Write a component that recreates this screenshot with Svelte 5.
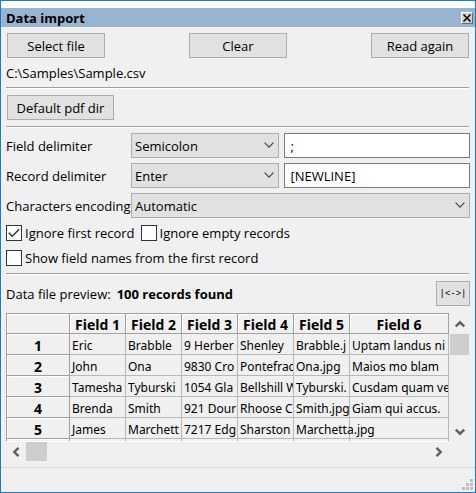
<script>
	let fieldDelimiter = 'Semicolon';
	let recordDelimiter = 'Enter';
	let encoding = 'Automatic';
	let fieldChar = ';';
	let recordChar = '[NEWLINE]';
	let ignoreFirst = true;
	let ignoreEmpty = false;
	let showNames = false;

	const fields = ['Field 1', 'Field 2', 'Field 3', 'Field 4', 'Field 5', 'Field 6'];
	const records = [
		['Eric', 'Brabble', '9 Herber', 'Shenley', 'Brabble.j', 'Uptam landus ni'],
		['John', 'Ona', '9830 Cro', 'Pontefrac', 'Ona.jpg', 'Maios mo blam'],
		['Tamesha', 'Tyburski', '1054 Gla', 'Bellshill W', 'Tyburski.', 'Cusdam quam ve'],
		['Brenda', 'Smith', '921 Dour', 'Rhoose C', 'Smith.jpg', 'Giam qui accus.'],
		['James', 'Marchett', '7217 Edg', 'Sharston', 'Marchetta.jpg', ''],
		['', '', '', '', '', '']
	];
</script>

{#snippet chevron()}
	<svg class="chevron" width="10" height="6" viewBox="0 0 10 6" aria-hidden="true">
		<path d="M0.6 0.7 5 5.1 9.4 0.7" fill="none" stroke="#444" stroke-width="1.2" />
	</svg>
{/snippet}

{#snippet arrow(angle)}
	<svg width="10" height="10" viewBox="0 0 10 10" aria-hidden="true">
		<path d="M0.8 7.5 5 3.3 9.2 7.5" fill="none" stroke="#606060" stroke-width="2.4" transform="rotate({angle} 5 5)" />
	</svg>
{/snippet}

{#snippet tick()}
	<svg class="tick" width="12" height="10" viewBox="0 0 12 10" aria-hidden="true">
		<path d="M0.8 4.8 4.2 8.2 11.2 1.2" fill="none" stroke="#333" stroke-width="1.5" />
	</svg>
{/snippet}

<main class="window">
	<header class="titlebar">
		<h1>Data import</h1>
		<button class="close" aria-label="Close">
			<svg width="8" height="8" viewBox="0 0 8 8" aria-hidden="true">
				<path d="M0.5 0.5 7.5 7.5M7.5 0.5 0.5 7.5" stroke="#000" stroke-width="1.5" />
			</svg>
		</button>
	</header>

	<div class="content">
		<div class="actions">
			<button class="btn">Select file</button>
			<button class="btn">Clear</button>
			<button class="btn">Read again</button>
		</div>
		<p class="path">C:\Samples\Sample.csv</p>
		<hr />
		<div class="actions">
			<button class="btn dir">Default pdf dir</button>
		</div>
		<hr />

		<div class="form">
			<label for="field-delimiter">Field delimiter</label>
			<div class="select">
				<select id="field-delimiter" bind:value={fieldDelimiter}>
					<option>Semicolon</option>
					<option>Comma</option>
					<option>Tab</option>
				</select>
				{@render chevron()}
			</div>
			<input type="text" aria-label="Field delimiter character" bind:value={fieldChar} />

			<label for="record-delimiter">Record delimiter</label>
			<div class="select">
				<select id="record-delimiter" bind:value={recordDelimiter}>
					<option>Enter</option>
					<option>Semicolon</option>
				</select>
				{@render chevron()}
			</div>
			<input type="text" aria-label="Record delimiter character" bind:value={recordChar} />

			<label for="encoding">Characters encoding</label>
			<div class="select wide">
				<select id="encoding" bind:value={encoding}>
					<option>Automatic</option>
					<option>UTF-8</option>
				</select>
				{@render chevron()}
			</div>
		</div>

		<div class="checks">
			<label class="check">
				<input type="checkbox" bind:checked={ignoreFirst} />
				{@render tick()}
				Ignore first record
			</label>
			<label class="check">
				<input type="checkbox" bind:checked={ignoreEmpty} />
				{@render tick()}
				Ignore empty records
			</label>
		</div>
		<div class="checks">
			<label class="check">
				<input type="checkbox" bind:checked={showNames} />
				{@render tick()}
				Show field names from the first record
			</label>
		</div>
		<hr />

		<div class="preview-head">
			<span>Data file preview:</span>
			<strong>100 records found</strong>
			<button class="btn fit" aria-label="Fit columns">|&lt;-&gt;|</button>
		</div>

		<div class="preview">
			<div class="viewport">
				<table>
					<thead>
						<tr>
							<th class="num"></th>
							{#each fields as field, i}
								<th class:last={i === fields.length - 1}>{field}</th>
							{/each}
						</tr>
					</thead>
					<tbody>
						{#each records as record, r}
							<tr>
								<th>{r < 5 ? r + 1 : ''}</th>
								{#each record as value, c}
									<td class:spill={c === 4 && value && !record[c + 1]}>{value}</td>
								{/each}
							</tr>
						{/each}
					</tbody>
				</table>
			</div>
			<div class="scroll vertical">
				<button aria-label="Scroll up">{@render arrow(0)}</button>
				<div class="thumb"></div>
				<button class="end" aria-label="Scroll down">{@render arrow(180)}</button>
			</div>
			<div class="scroll horizontal">
				<button aria-label="Scroll left">{@render arrow(270)}</button>
				<div class="thumb"></div>
				<button class="end" aria-label="Scroll right">{@render arrow(90)}</button>
			</div>
		</div>
	</div>

	<footer class="status">
		<svg width="11" height="11" viewBox="0 0 11 11" fill="#bfbfbf" aria-hidden="true">
			<path d="M8 0h3v3h-3zM4 4h3v3h-3zM8 4h3v3h-3zM0 8h3v3h-3zM4 8h3v3h-3zM8 8h3v3h-3z" />
		</svg>
	</footer>
</main>

<style>
	:global(body) {
		margin: 0;
	}

	.window,
	.window * {
		box-sizing: border-box;
	}

	.window {
		display: flex;
		flex-direction: column;
		min-height: 100vh;
		padding-top: 7px;
		border: 1px solid #187bcd;
		background: linear-gradient(#fff 7px, #f0f0f0 7px);
		color: #000;
		font-family: 'Open Sans', 'Noto Sans', sans-serif;
		font-size: 13px;
		line-height: 18px;
	}

	button,
	select,
	input {
		margin: 0;
		color: inherit;
		font: inherit;
	}

	.titlebar {
		display: flex;
		align-items: center;
		justify-content: space-between;
		height: 19px;
		padding: 0 2px 0 5px;
		background: #99b4d1;
	}

	h1 {
		margin: 0;
		font-size: 13px;
		line-height: 18px;
	}

	.close {
		display: grid;
		place-items: center;
		width: 12px;
		height: 12px;
		padding: 0;
		border: 1px solid;
		border-color: #fff #696969 #696969 #fff;
		background: #d4d0c8;
	}

	.content {
		flex: 1;
		padding: 6px 5px 0;
	}

	.actions {
		display: flex;
		justify-content: space-between;
		padding: 0 1px;
	}

	.btn {
		width: 98px;
		height: 25px;
		padding: 0;
		border: 1px solid #adadad;
		background: #e1e1e1;
	}

	.dir {
		width: 107px;
	}

	.path {
		margin: 6px 0 5px;
	}

	hr {
		height: 2px;
		margin: 0 1px 6px 0;
		border: 0;
		border-top: 1px solid #a0a0a0;
		border-bottom: 1px solid #fff;
	}

	.actions + hr {
		margin-top: 6px;
		margin-bottom: 5px;
	}

	.form {
		display: grid;
		grid-template-columns: 120px 4fr 5fr;
		gap: 5px;
		align-items: center;
	}

	.form label {
		white-space: nowrap;
	}

	.select {
		position: relative;
	}

	.wide {
		grid-column: span 2;
	}

	select,
	input[type='text'] {
		display: block;
		width: 100%;
		height: 25px;
		border-radius: 0;
		appearance: none;
	}

	select {
		padding: 0 24px 0 3px;
		border: 1px solid #adadad;
		background: #e1e1e1;
	}

	input[type='text'] {
		padding: 0 5px;
		border: 1px solid #7a7a7a;
		background: #fff;
	}

	.chevron {
		position: absolute;
		top: 9px;
		right: 5px;
		pointer-events: none;
	}

	.checks {
		display: flex;
		gap: 6px;
		margin: 6px 0;
	}

	.checks + .checks {
		margin-top: 7px;
	}

	.check {
		position: relative;
		display: flex;
		align-items: center;
		gap: 3px;
		height: 18px;
		white-space: nowrap;
	}

	.check input {
		width: 16px;
		height: 16px;
		border: 1px solid #333;
		background: #fff;
		appearance: none;
	}

	.tick {
		position: absolute;
		top: 4px;
		left: 2px;
		visibility: hidden;
		pointer-events: none;
	}

	.check input:checked + .tick {
		visibility: visible;
	}

	.preview-head {
		display: flex;
		align-items: center;
		gap: 6px;
		margin-bottom: 7px;
	}

	.fit {
		width: 34px;
		margin-left: auto;
		font-family: 'Liberation Mono', monospace;
		font-size: 9px;
	}

	.preview {
		display: grid;
		grid-template-columns: 1fr 19px;
		grid-template-rows: 129px 19px;
		column-gap: 1px;
		padding-right: 1px;
	}

	.viewport {
		overflow: hidden;
		border-bottom: 1px solid #fff;
	}

	table {
		width: 100%;
		border-left: 1px solid #a0a0a0;
		border-top: 1px solid #a0a0a0;
		border-spacing: 0;
		table-layout: fixed;
	}

	th,
	td {
		height: 21px;
		padding: 4px 0 0;
		overflow: hidden;
		line-height: 16px;
		white-space: nowrap;
	}

	thead th {
		width: 56px;
		height: 20px;
		padding-top: 3px;
	}

	thead .num {
		width: 63px;
	}

	thead .last {
		width: auto;
	}

	th {
		border-right: 1px solid #a0a0a0;
		border-bottom: 1px solid #a0a0a0;
		box-shadow: inset 1px 1px #fff;
		font-size: 14px;
		text-align: center;
	}

	td {
		padding-left: 2px;
		border-right: 1px solid #b8b8b8;
		border-bottom: 1px solid #b8b8b8;
		font-family: 'Noto Sans', 'Open Sans', sans-serif;
		font-size: 12px;
	}

	.spill {
		overflow: visible;
	}

	.scroll {
		display: flex;
	}

	.vertical {
		flex-direction: column;
	}

	.scroll button {
		display: grid;
		flex: none;
		place-items: center;
		width: 20px;
		height: 21px;
		padding: 0;
		border: 0;
		background: none;
	}

	.horizontal button {
		height: 19px;
	}

	.scroll .end {
		margin-top: auto;
	}

	.horizontal .end {
		margin-top: 0;
		margin-left: auto;
	}

	.thumb {
		width: 21px;
		height: 21px;
		background: #cdcdcd;
	}

	.vertical .thumb {
		width: 19px;
	}

	.horizontal .thumb {
		height: 19px;
	}

	.status {
		display: flex;
		align-items: flex-end;
		justify-content: flex-end;
		height: 25px;
		padding: 2px;
		border-top: 1px solid #d7d7d7;
	}
</style>
